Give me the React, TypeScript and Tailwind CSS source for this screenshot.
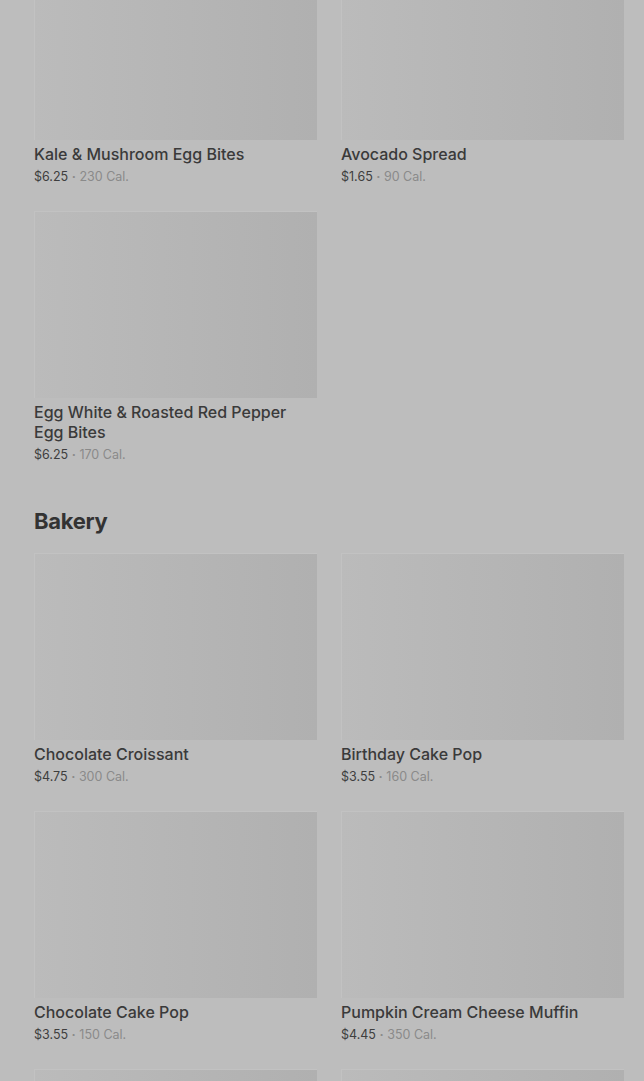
import React from 'react';

type Item = { name: string; price: string; cal: string };

const breakfast: Item[] = [
    { name: 'Kale & Mushroom Egg Bites', price: '$6.25', cal: '230 Cal.' },
    { name: 'Avocado Spread', price: '$1.65', cal: '90 Cal.' },
    { name: 'Egg White & Roasted Red Pepper Egg Bites', price: '$6.25', cal: '170 Cal.' },
];

const bakery: Item[] = [
    { name: 'Chocolate Croissant', price: '$4.75', cal: '300 Cal.' },
    { name: 'Birthday Cake Pop', price: '$3.55', cal: '160 Cal.' },
    { name: 'Chocolate Cake Pop', price: '$3.55', cal: '150 Cal.' },
    { name: 'Pumpkin Cream Cheese Muffin', price: '$4.45', cal: '350 Cal.' },
];

const imageCls = 'h-[187px] w-full bg-linear-to-r from-[#bbbbbb] to-[#b0b0b0] shadow-[inset_1px_1px_0_#c2c2c2]';

const Card = ({ item }: { item: Item }) => (
    <div className="flex flex-col">
        <div className={imageCls} />
        <div className="mt-1 pr-6 text-[16px] leading-[20px] font-medium text-[#3a3a3a]">{item.name}</div>
        <div className="mt-[3px] text-[12.5px] leading-[20px]">
            <span className="text-[#3e3e3e]">{item.price}</span>
            <span className="text-[#8a8a8a]"> <span className="font-bold">·</span> {item.cal}</span>
        </div>
    </div>
);

const App = () => {
    return (
        <div
            className="h-[1081px] overflow-hidden bg-[#bdbdbd] pl-[34px] pr-[20px]"
            style={{ fontFamily: 'Inter, "Liberation Sans", sans-serif' }}
        >
            <div className="-mt-[47px] grid grid-cols-2 gap-x-6 gap-y-6">
                {breakfast.map((item) => (
                    <Card key={item.name} item={item} />
                ))}
            </div>

            <h2 className="mt-[42px] mb-[18px] text-[22px] leading-[28px] font-bold tracking-[-0.3px] text-[#333333]">
                Bakery
            </h2>

            <div className="grid grid-cols-2 gap-x-6 gap-y-6">
                {bakery.map((item) => (
                    <Card key={item.name} item={item} />
                ))}
                <div className={imageCls} />
                <div className={imageCls} />
            </div>
        </div>
    );
};

export default App;
